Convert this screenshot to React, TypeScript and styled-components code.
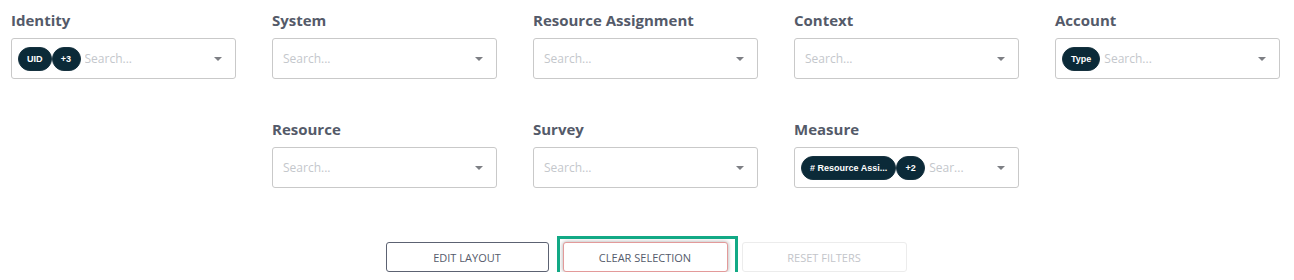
import styled, { createGlobalStyle } from "styled-components";

const GlobalStyle = createGlobalStyle`
  body {
    margin: 0;
    background: #ffffff;
    font-family: "Open Sans", Lato, sans-serif;
  }
`;

type Filter = {
  label: string;
  chips?: string[];
  placeholder?: string;
  column: number;
};

const filters: Filter[] = [
  { label: "Identity", chips: ["UID", "+3"], column: 1 },
  { label: "System", column: 2 },
  { label: "Resource Assignment", column: 3 },
  { label: "Context", column: 4 },
  { label: "Account", chips: ["Type"], column: 5 },
  { label: "Resource", column: 2 },
  { label: "Survey", column: 3 },
  { label: "Measure", chips: ["# Resource Assi...", "+2"], placeholder: "Sear...", column: 4 },
];

const App = () => {
  return (
    <>
      <GlobalStyle />
      <Page>
        <FilterGrid>
          {filters.map((f) => (
            <Field key={f.label} $column={f.column}>
              <Label>{f.label}</Label>
              <Select>
                {f.chips?.map((c) => (
                  <Chip key={c} $round={c.startsWith("+")}>
                    {c}
                  </Chip>
                ))}
                <Placeholder>{f.placeholder ?? "Search..."}</Placeholder>
                <Caret />
              </Select>
            </Field>
          ))}
        </FilterGrid>
        <ButtonRow>
          <ActionButton $variant="dark">EDIT LAYOUT</ActionButton>
          <Highlighted>
            <ActionButton $variant="danger">CLEAR SELECTION</ActionButton>
            <HighlightFrame />
          </Highlighted>
          <ActionButton $variant="disabled">RESET FILTERS</ActionButton>
        </ButtonRow>
      </Page>
    </>
  );
};

const Page = styled.div`
  padding: 11px 0 0 11px;
  box-sizing: border-box;
  width: 1294px;
`;

const FilterGrid = styled.div`
  display: grid;
  grid-template-columns: repeat(5, 225px);
  column-gap: 36px;
  row-gap: 41px;
`;

const Field = styled.div<{ $column: number }>`
  grid-column: ${(p) => p.$column};
  display: flex;
  flex-direction: column;
`;

const Label = styled.div`
  font-size: 15px;
  font-weight: 700;
  line-height: 18px;
  color: #545a69;
  margin-bottom: 9px;
`;

const Select = styled.div`
  height: 41px;
  box-sizing: border-box;
  border: 1px solid #c9c9c9;
  border-radius: 3px;
  display: flex;
  align-items: center;
  padding: 0 13px 0 6px;
`;

const Chip = styled.span<{ $round: boolean }>`
  height: 24px;
  box-sizing: border-box;
  border-radius: 12px;
  background: #0b2a38;
  color: #ffffff;
  font-family: "Liberation Sans", Arial, sans-serif;
  font-size: 9px;
  font-weight: 700;
  display: inline-flex;
  align-items: center;
  padding: 0 ${(p) => (p.$round ? "7px" : "8px")};
  min-width: 29px;
  justify-content: center;
  white-space: nowrap;
  border: 1px solid #16323f;
`;

const Placeholder = styled.span`
  flex: 1;
  font-size: 12px;
  color: #c4c7cc;
  margin-left: 4px;
  white-space: nowrap;
  overflow: hidden;
`;

const Caret = styled.span`
  width: 0;
  height: 0;
  border-left: 4px solid transparent;
  border-right: 4px solid transparent;
  border-top: 4px solid #7d7f84;
  margin-left: 6px;
`;

const ButtonRow = styled.div`
  display: flex;
  justify-content: center;
  gap: 14px;
  margin-top: 54px;
  padding-right: 13px;
`;

const ActionButton = styled.button<{ $variant: "dark" | "danger" | "disabled" }>`
  height: 30px;
  width: ${(p) => (p.$variant === "dark" ? "163px" : "165px")};
  background: #ffffff;
  border-radius: 3px;
  font-family: "Open Sans", Lato, sans-serif;
  font-size: 11px;
  cursor: pointer;
  color: ${(p) => (p.$variant === "disabled" ? "#c3c5ca" : "#555b6b")};
  border: 1px solid
    ${(p) =>
      p.$variant === "dark" ? "#5c6272" : p.$variant === "danger" ? "#e39a9a" : "#ececec"};
  box-shadow: ${(p) => (p.$variant === "danger" ? "0 0 4px rgba(0,0,0,0.35)" : "none")};
`;

const Highlighted = styled.div`
  position: relative;
  display: flex;
`;

const HighlightFrame = styled.div`
  position: absolute;
  left: -6px;
  right: -10px;
  top: -6px;
  bottom: -8px;
  border: 3px solid #12a985;
  pointer-events: none;
`;

export default App;
